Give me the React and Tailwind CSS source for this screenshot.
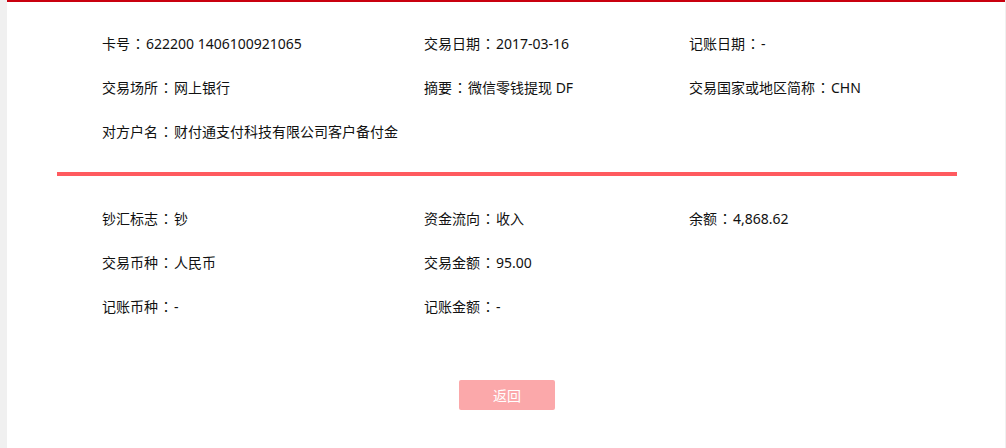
const top = [
    ["卡号", "622200 1406100921065"],
    ["交易日期", "2017-03-16"],
    ["记账日期", "-"],
    ["交易场所", "网上银行"],
    ["摘要", "微信零钱提现 DF"],
    ["交易国家或地区简称", "CHN"],
    ["对方户名", "财付通支付科技有限公司客户备付金"],
];

const bottom = [
    ["钞汇标志", "钞"],
    ["资金流向", "收入"],
    ["余额", "4,868.62"],
    ["交易币种", "人民币"],
    ["交易金额", "95.00"],
    null,
    ["记账币种", "-"],
    ["记账金额", "-"],
];

const Grid = ({ items }) => (
    <div className="grid grid-cols-[322px_265px_1fr] pl-[45px]">
        {items.map((item, i) => (
            <div key={i} className="h-[44px] flex items-center whitespace-nowrap">
                {item && (
                    <span>
                        {item[0]}
                        <span
                            className="px-[1px]"
                            style={{ fontFamily: '"Noto Sans CJK TC", sans-serif' }}
                        >
                            ：
                        </span>
                        {item[1]}
                    </span>
                )}
            </div>
        ))}
    </div>
);

export default function App() {
    return (
        <div
            className="w-[1006px] h-[448px] bg-[#f0f0f0] flex text-[14px] text-[#111]"
            style={{ fontFamily: '"Noto Sans", "Noto Sans CJK SC", sans-serif' }}
        >
            <div className="ml-[7px] mr-[1px] flex-1 bg-white border-t-2 border-[#c9000f]">
                <div className="ml-[50px] mr-[48px] pt-[19px]">
                    <Grid items={top} />
                    <div className="mt-[19px] mb-[20px] h-[4px] bg-[#ff5a5f]" />
                    <Grid items={bottom} />
                    <div className="flex justify-center mt-[52px]">
                        <button className="w-[96px] h-[30px] rounded-[2px] bg-[#fba8aa] text-white text-[14px]">
                            返回
                        </button>
                    </div>
                </div>
            </div>
        </div>
    );
}
